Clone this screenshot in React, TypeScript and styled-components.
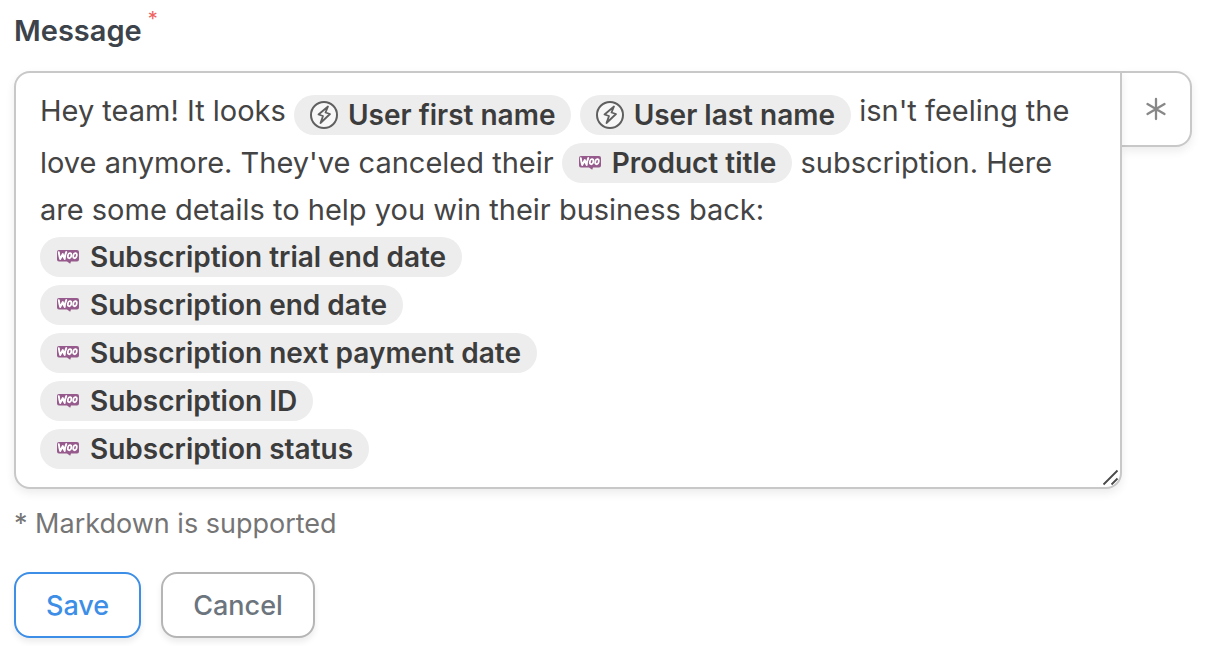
import React from "react";
import styled, { createGlobalStyle } from "styled-components";

const GlobalStyle = createGlobalStyle`
  *, *::before, *::after { box-sizing: border-box; }
  body {
    margin: 0;
    background: #fff;
    color: #444;
    font-family: Inter, "Liberation Sans", sans-serif;
    font-size: 29px;
  }
`;

const Form = styled.form`
  padding: 8px 16px 8px 14px;
`;

const Label = styled.label`
  display: flex;
  align-items: flex-start;
  gap: 6px;
  height: 48px;
  margin-bottom: 15px;
  color: #3c434a;
  font-weight: 600;
  line-height: 46px;
`;

const Required = styled.span`
  color: #f0625f;
  font-size: 20px;
  font-weight: 400;
  line-height: 22px;
`;

const Field = styled.div`
  display: flex;
  align-items: flex-start;
`;

const Editor = styled.div`
  position: relative;
  flex: 1;
  min-width: 0;
  padding: 15px 24px 14px;
  border: 2px solid #c8c8c8;
  border-radius: 16px 0 16px 16px;
  background: #fff;
  box-shadow: 0 4px 10px rgba(0, 0, 0, 0.08);
  outline: none;
`;

const Paragraph = styled.p`
  margin: 0;
  line-height: 46px;
`;

const TokenList = styled.ul`
  margin: 0;
  padding: 0;
  list-style: none;
`;

const TokenItem = styled.li`
  display: flex;
`;

const Pill = styled.span<{ $tall: boolean }>`
  display: inline-flex;
  align-items: center;
  gap: 10px;
  height: 40px;
  margin: 4px 0;
  padding: 0 16px;
  border-radius: 20px;
  background: #ededed;
  color: #3c3c3c;
  font-size: 28px;
  font-weight: 600;
  line-height: 40px;
  white-space: nowrap;
  vertical-align: ${(p) => (p.$tall ? "-8px" : "2px")};
`;

const ResizeGrip = styled.svg`
  position: absolute;
  right: 0;
  bottom: 0;
`;

const PickerButton = styled.button`
  display: flex;
  align-items: center;
  justify-content: center;
  width: 70px;
  height: 76px;
  padding: 0;
  border: 2px solid #c8c8c8;
  border-left: 0;
  border-radius: 0 16px 16px 0;
  background: #fff;
  box-shadow: 0 4px 10px rgba(0, 0, 0, 0.08);
`;

const Hint = styled.p`
  margin: 10px 0 23px;
  color: #757575;
  font-size: 27px;
  line-height: 50px;
`;

const Actions = styled.div`
  display: flex;
  gap: 20px;
`;

const ActionButton = styled.button<{ $primary?: boolean }>`
  height: 66px;
  padding: 0 30px;
  border: 2px solid ${(p) => (p.$primary ? "#3d8ee6" : "#b5b5b5")};
  border-radius: 16px;
  background: #fff;
  box-shadow: 0 4px 6px rgba(0, 0, 0, 0.08);
  color: ${(p) => (p.$primary ? "#3d8ee6" : "#6c757d")};
  font: 500 27px Inter, "Liberation Sans", sans-serif;
`;

const BoltIcon = () => (
  <svg width="28" height="28" viewBox="0 0 28 28" fill="none" stroke="#5f5f5f" aria-hidden="true">
    <circle cx="14" cy="14" r="13" fill="#f7f7f7" strokeWidth="2" />
    <path d="M18 5.500 8.500 13.500l4.500 1.500-2.500 7 9.500-9-4.500-1.500z" strokeWidth="1.800" strokeLinejoin="round" />
  </svg>
);

const WooIcon = () => (
  <svg width="24" height="16" viewBox="0 0 24 16" fill="none" aria-hidden="true">
    <path d="M3 1h18a2 2 0 0 1 2 2v7.500a2 2 0 0 1-2 2h-6l-.8 2.200-3.200-2.200H3a2 2 0 0 1-2-2V3a2 2 0 0 1 2-2z" fill="#965a8c" />
    <path
      d="M2.800 3.200c.3 2.600.7 4.700 1.400 6.800L6.800 5c.3 2 .9 3.600 1.900 5 .1-2.500.6-4.800 1.600-7"
      stroke="#fff" strokeWidth="1.900" strokeLinecap="round" strokeLinejoin="round"
    />
    <ellipse cx="13.600" cy="6.700" rx="1.700" ry="2.600" transform="rotate(14 13.600 6.700)" stroke="#fff" strokeWidth="1.800" />
    <ellipse cx="19" cy="6.700" rx="1.700" ry="2.600" transform="rotate(14 19 6.700)" stroke="#fff" strokeWidth="1.800" />
  </svg>
);

const Token = ({ icon, children }: { icon: "bolt" | "woo"; children: React.ReactNode }) => (
  <Pill $tall={icon === "bolt"} contentEditable={false}>
    {icon === "bolt" ? <BoltIcon /> : <WooIcon />}
    {children}
  </Pill>
);

const details = [
  "Subscription trial end date",
  "Subscription end date",
  "Subscription next payment date",
  "Subscription ID",
  "Subscription status",
];

export default function App() {
  return (
    <>
      <GlobalStyle />
      <Form onSubmit={(e) => e.preventDefault()}>
        <Label id="message-label">
          Message <Required>*</Required>
        </Label>
        <Field>
          <Editor
            role="textbox"
            aria-multiline="true"
            aria-labelledby="message-label"
            aria-describedby="message-hint"
            contentEditable
            suppressContentEditableWarning
            spellCheck={false}
          >
            <Paragraph>
              Hey team! It looks <Token icon="bolt">User first name</Token>{" "}
              <Token icon="bolt">User last name</Token> isn't feeling the love anymore. They've
              canceled their <Token icon="woo">Product title</Token> subscription. Here are some
              details to help you win their business back:
            </Paragraph>
            <TokenList>
              {details.map((name) => (
                <TokenItem key={name}>
                  <Token icon="woo">{name}</Token>
                </TokenItem>
              ))}
            </TokenList>
            <ResizeGrip width="18" height="18" viewBox="0 0 18 18" stroke="#4a4a4a" strokeWidth="1.800" aria-hidden="true">
              <path d="M1.500 15.500 15.500 1.500M9.500 15.500l6-6" />
            </ResizeGrip>
          </Editor>
          <PickerButton type="button" aria-label="Insert a field">
            <svg width="24" height="24" viewBox="0 0 24 24" stroke="#888" strokeWidth="2.300" strokeLinecap="round" aria-hidden="true">
              <path d="M12 2v20M3.500 7l17 10M20.500 7l-17 10" />
            </svg>
          </PickerButton>
        </Field>
        <Hint id="message-hint">* Markdown is supported</Hint>
        <Actions>
          <ActionButton type="submit" $primary>
            Save
          </ActionButton>
          <ActionButton type="button">Cancel</ActionButton>
        </Actions>
      </Form>
    </>
  );
}
